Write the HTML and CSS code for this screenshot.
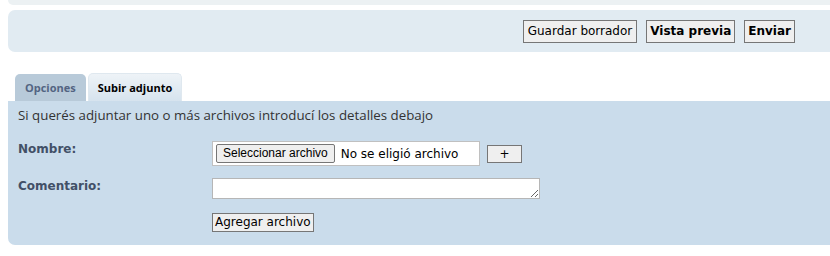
FILE: index.html
```html
<!DOCTYPE html>
<html lang="es">
<head>
    <meta charset="UTF-8">
    <meta name="viewport" content="width=device-width, initial-scale=1.0">
    <title>Publicar mensaje</title>
    <link rel="stylesheet" href="styles.css">
</head>
<body>
    <div class="page">
        <div class="panel panel-top"></div>

        <div class="panel submit-panel">
            <button type="button" class="btn btn-draft">Guardar borrador</button>
            <button type="button" class="btn btn-bold">Vista previa</button>
            <button type="button" class="btn btn-bold">Enviar</button>
        </div>

        <ul class="tabs">
            <li class="tab">Opciones</li>
            <li class="tab tab-active">Subir adjunto</li>
        </ul>

        <div class="panel attach-panel">
            <p class="attach-intro">Si querés adjuntar uno o más archivos introducí los detalles debajo</p>

            <dl class="attach-form">
                <dt>Nombre:</dt>
                <dd class="file-row">
                    <span class="file-box">
                        <span class="file-btn">Seleccionar archivo</span>
                        <span class="file-name">No se eligió archivo</span>
                    </span>
                    <button type="button" class="btn btn-plus">+</button>
                </dd>

                <dt>Comentario:</dt>
                <dd><textarea class="comment" rows="1"></textarea></dd>

                <dt></dt>
                <dd><button type="button" class="btn btn-add">Agregar archivo</button></dd>
            </dl>
        </div>
    </div>
</body>
</html>
```

FILE: styles.css
```css
body {
    margin: 0;
    padding: 0 0 0 8px;
    font-family: "DejaVu Sans", Verdana, sans-serif;
    color: #333;
    background: #fff;
    overflow: hidden;
}

.page {
    width: 840px;
}

.panel {
    border-radius: 7px;
}

.panel-top {
    height: 5px;
    background-color: #ecf1f3;
    border-radius: 0 0 7px 7px;
}

.submit-panel {
    margin-top: 5px;
    height: 42px;
    background-color: #e1ebf2;
    display: flex;
    align-items: center;
    justify-content: flex-end;
    gap: 9px;
    padding-right: 53px;
    box-sizing: border-box;
}

.btn {
    font-family: "DejaVu Sans", Verdana, sans-serif;
    font-size: 12px;
    color: #000;
    background-color: #efefef;
    border: 1px solid #767676;
    border-radius: 0;
    padding: 0 3px;
    height: 23px;
    line-height: 21px;
    margin: 0;
}

.btn-draft {
    padding: 0 4px;
}

.btn-bold {
    font-weight: bold;
    padding: 0 3px;
}

.tabs {
    list-style: none;
    margin: 21px 0 0 7px;
    padding: 0;
    display: flex;
    align-items: flex-end;
    gap: 2px;
}

.tab {
    font-family: "Open Sans", sans-serif;
    font-size: 11px;
    font-weight: bold;
    color: #536482;
    background-color: #b8cad9;
    border-radius: 5px 5px 0 0;
    height: 27px;
    line-height: 27px;
    padding: 0 10px;
    box-sizing: border-box;
}

.tab-active {
    color: #000;
    height: 28px;
    line-height: 28px;
    padding: 0 9px;
    background: linear-gradient(#eef3f7, #d6e3ee);
    border: 1px solid #dfe8ef;
    border-bottom: none;
}

.attach-panel {
    background-color: #cadceb;
    border-radius: 0 0 7px 7px;
    padding: 5px 10px 12px;
    height: 144px;
    box-sizing: border-box;
}

.attach-intro {
    font-family: "Open Sans", sans-serif;
    font-size: 13.3px;
    line-height: 18px;
    margin: 0 0 17px;
    color: #333;
}

.attach-form {
    display: grid;
    grid-template-columns: 194px auto;
    row-gap: 12px;
    margin: 0;
    align-items: center;
}

.attach-form dt {
    font-size: 12px;
    font-weight: bold;
    color: #425067;
    align-self: start;
    padding-top: 1px;
}

.attach-form dd {
    margin: 0;
    display: flex;
    align-items: center;
}

.file-row {
    gap: 7px;
}

.file-box {
    display: flex;
    align-items: center;
    width: 268px;
    height: 25px;
    box-sizing: border-box;
    background-color: #fff;
    border: 1px solid #c0c0c0;
    padding: 0 3px;
}

.file-btn {
    font-family: "Liberation Sans", Arial, sans-serif;
    font-size: 12px;
    color: #000;
    background-color: #efefef;
    border: 1px solid #767676;
    border-radius: 2px;
    padding: 1px 6px;
    line-height: 15px;
}

.file-name {
    font-size: 12px;
    color: #000;
    margin-left: 6px;
}

.btn-plus {
    width: 35px;
    height: 18px;
    line-height: 16px;
    padding: 0;
}

.comment {
    width: 328px;
    height: 21px;
    box-sizing: border-box;
    border: 1px solid #b6b6b6;
    background-color: #fff;
    margin: 0;
    padding: 0;
    resize: both;
}

.btn-add {
    height: 19px;
    line-height: 17px;
    padding: 0 2px;
    margin-top: 2px;
}
```
